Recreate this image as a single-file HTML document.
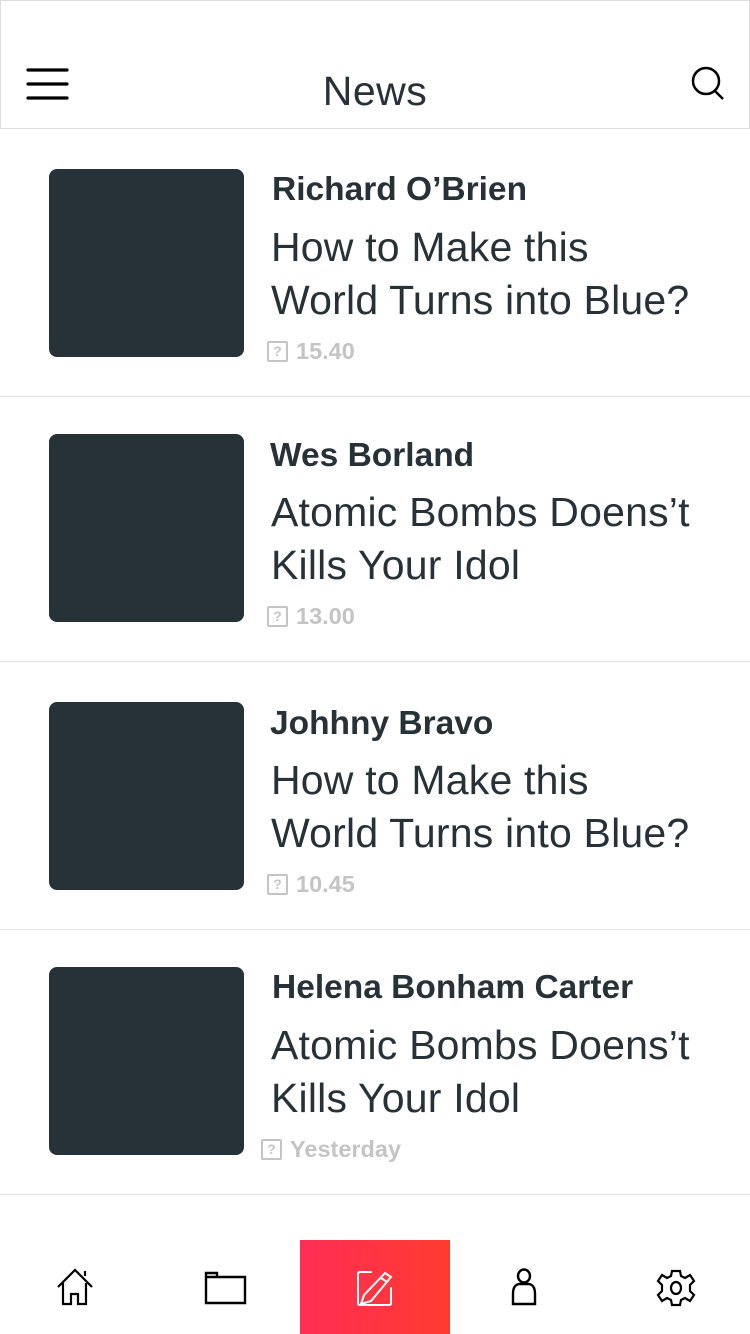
<!DOCTYPE html>
<html><head><meta charset="utf-8"><style>
*{margin:0;padding:0;box-sizing:border-box}
body{width:750px;height:1334px;background:#fff;position:relative;overflow:hidden;font-family:"Liberation Sans",Helvetica,Arial,sans-serif;color:#263238}
.hdr{position:absolute;left:0;top:0;width:750px;height:129px;border:1px solid #dedede}
.title{position:absolute;left:0;width:750px;top:68px;text-align:center;font-size:41px;font-weight:300;color:#263238;letter-spacing:0.5px}
.sep{position:absolute;left:0;width:750px;height:1px;background:#e2e2e2}
.img{position:absolute;left:49px;width:195px;height:188px;background:#263238;border-radius:8px}
.name{position:absolute;font-size:33.5px;font-weight:bold;color:#263238;white-space:nowrap}
.head{position:absolute;left:271px;font-size:41px;line-height:53px;font-weight:300;color:#263238;white-space:nowrap;letter-spacing:0.2px}
.time{position:absolute;font-size:23.5px;font-weight:bold;color:#c4c4c4;white-space:nowrap;display:flex;align-items:center}
.q{display:inline-block;width:21px;height:21px;border:2px solid #c4c4c4;border-radius:2px;font-size:14px;line-height:17px;text-align:center;margin-right:8px}
.nav{position:absolute;left:300px;top:1240px;width:150px;height:94px;background:linear-gradient(90deg,#ff2d55,#ff3b30)}
svg{position:absolute}
</style></head><body>
<div class="hdr"></div>
<svg style="left:26px;top:67px" width="44" height="34"><g stroke="#000" stroke-width="3.2" stroke-linecap="round"><line x1="2" y1="3" x2="41" y2="3"/><line x1="2" y1="17" x2="41" y2="17"/><line x1="2" y1="31" x2="41" y2="31"/></g></svg>
<div class="title">News</div>
<svg style="left:690px;top:65px" width="36" height="36"><circle cx="16" cy="16" r="13" fill="none" stroke="#000" stroke-width="2.5"/><line x1="25" y1="26" x2="33" y2="34" stroke="#000" stroke-width="2.5"/></svg>

<div class="img" style="top:169px"></div>
<div class="name" style="left:272px;top:171px">Richard O’Brien</div>
<div class="head" style="top:221px">How to Make this<br>World Turns into Blue?</div>
<div class="time" style="left:267px;top:338px"><span class="q">?</span>15.40</div>
<div class="sep" style="top:396px"></div>

<div class="img" style="top:434px"></div>
<div class="name" style="left:270px;top:437px">Wes Borland</div>
<div class="head" style="top:486px">Atomic Bombs Doens’t<br>Kills Your Idol</div>
<div class="time" style="left:267px;top:603px"><span class="q">?</span>13.00</div>
<div class="sep" style="top:661px"></div>

<div class="img" style="top:702px"></div>
<div class="name" style="left:270px;top:705px">Johhny Bravo</div>
<div class="head" style="top:754px">How to Make this<br>World Turns into Blue?</div>
<div class="time" style="left:267px;top:871px"><span class="q">?</span>10.45</div>
<div class="sep" style="top:929px"></div>

<div class="img" style="top:967px"></div>
<div class="name" style="left:272px;top:969px">Helena Bonham Carter</div>
<div class="head" style="top:1019px">Atomic Bombs Doens’t<br>Kills Your Idol</div>
<div class="time" style="left:261px;top:1136px"><span class="q">?</span>Yesterday</div>
<div class="sep" style="top:1194px"></div>

<div class="nav"></div>
<svg style="left:55px;top:1268px" width="40" height="40" fill="none" stroke="#000" stroke-width="2.2"><path d="M3 19 L20 2 L37 19 M8 15 V36 H16 V26 H23 V36 H31 V15 M30 8 V3"/></svg>
<svg style="left:203px;top:1270px" width="46" height="36" fill="none" stroke="#000" stroke-width="2.4"><path d="M3 33 V3 H14 V7 H42 V33 Z M3 7 H14"/></svg>
<svg style="left:356px;top:1270px" width="40" height="38" fill="none" stroke="#fff" stroke-width="2"><path d="M16 2 H4 Q2 2 2 4 V33 Q2 35 4 35 H33 Q35 35 35 33 V17"/><path d="M29 3 L35 7 L15 31 L5 34 L8 25 Z M25 8 L31 12"/></svg>
<svg style="left:510px;top:1268px" width="28" height="40" fill="none" stroke="#000" stroke-width="2.4"><ellipse cx="14" cy="8" rx="6" ry="6.5"/><path d="M3 36 V26 Q3 17 9 16 H19 Q25 17 25 26 V36 Z"/></svg>
<svg style="left:655px;top:1268px" width="42" height="40" fill="none" stroke="#000" stroke-width="2.2"><path d="M17 3 H25 L26 8 L30 10 L35 7 L39 13 L35 17 V23 L39 27 L35 33 L30 30 L26 32 L25 37 H17 L16 32 L12 30 L7 33 L3 27 L7 23 V17 L3 13 L7 7 L12 10 L16 8 Z"/><ellipse cx="21" cy="20" rx="5" ry="6"/></svg>
</body></html>
